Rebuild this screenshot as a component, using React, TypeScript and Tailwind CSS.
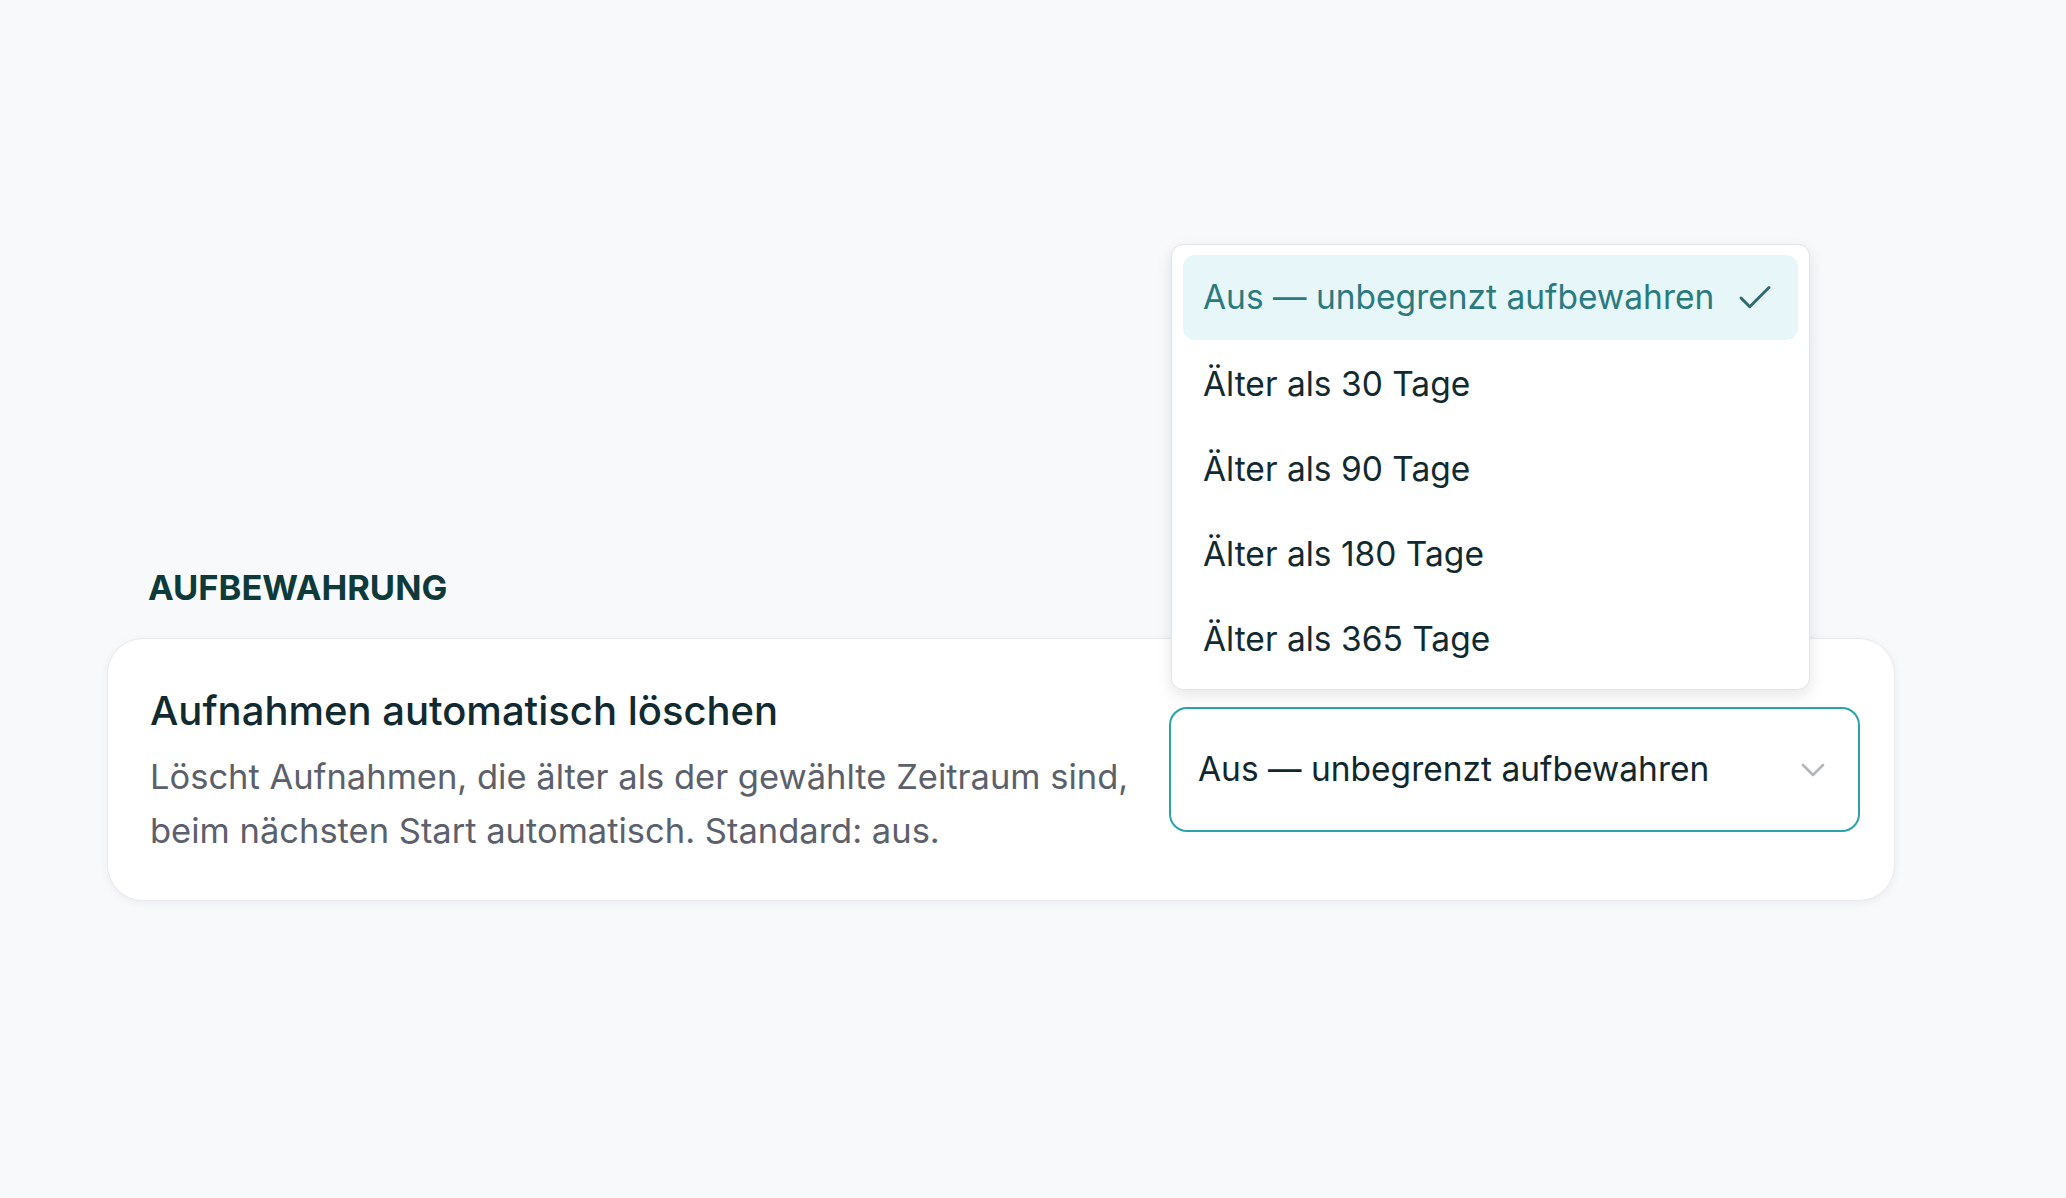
import React, { useState } from 'react';
import { Check, ChevronDown } from 'lucide-react';

const OPTIONS = [
    'Aus — unbegrenzt aufbewahren',
    'Älter als 30 Tage',
    'Älter als 90 Tage',
    'Älter als 180 Tage',
    'Älter als 365 Tage',
];

const RetentionSelect = () => {
    const [selected, setSelected] = useState(0);
    const [open, setOpen] = useState(true);

    return (
        <div className="relative shrink-0">
            {open && (
                <div className="absolute left-[2px] bottom-[calc(100%+17px)] w-[639px] bg-white border border-[#e1e4e8] rounded-[12px] shadow-[0_6px_16px_rgba(15,23,42,0.10)] pt-[10px] pb-[7px] px-[11px] z-10">
                    {OPTIONS.map((o, i) => (
                        <button
                            key={o}
                            onClick={() => { setSelected(i); setOpen(false); }}
                            className={`w-full h-[85px] flex items-center justify-between pl-[20px] pr-[22px] rounded-[12px] text-left text-[33.5px] ${i === selected ? 'bg-[#e7f6f9] text-[#2b7a7e]' : 'text-[#112a30]'} ${i === 0 ? 'h-[83px] mb-[2px]' : ''}`}
                        >
                            <span>{o}</span>
                            {i === selected && <Check className="w-[42px] h-[42px] text-[#2f6a6d]" strokeWidth={1.7} />}
                        </button>
                    ))}
                </div>
            )}
            <button
                onClick={() => setOpen(!open)}
                className="w-[691px] h-[125px] flex items-center justify-between border-2 border-[#2ba2aa] rounded-[18px] bg-white pl-[27px] pr-[25px] text-[33.5px] text-[#10272d] text-left"
            >
                <span>{OPTIONS[selected]}</span>
                <ChevronDown className="w-[40px] h-[40px] text-[#b3b6bb]" strokeWidth={1.6} />
            </button>
        </div>
    );
};

export default function App() {
    return (
        <div className="min-h-screen bg-[#f8f9fb] font-['Inter','Noto_Sans',sans-serif] pt-[568px] pl-[107px]">
            <h2 className="ml-[41px] text-[34.5px] leading-[40px] font-bold text-[#0f3a3a] mb-[30px]">AUFBEWAHRUNG</h2>
            <div className="w-[1788px] h-[263px] bg-white border border-[#e8eaed] rounded-[36px] shadow-[0_2px_8px_rgba(15,23,42,0.06)] flex items-center justify-between pl-[42px] pr-[34px]">
                <div className="flex flex-col pt-[6px]">
                    <div className="text-[40px] leading-[48px] font-medium text-[#102a2f]">Aufnahmen automatisch löschen</div>
                    <div className="mt-[15px] text-[34.5px] leading-[54px] text-[#5b606b]">
                        Löscht Aufnahmen, die älter als der gewählte Zeitraum sind,<br />
                        beim nächsten Start automatisch. Standard: aus.
                    </div>
                </div>
                <RetentionSelect />
            </div>
        </div>
    );
}
